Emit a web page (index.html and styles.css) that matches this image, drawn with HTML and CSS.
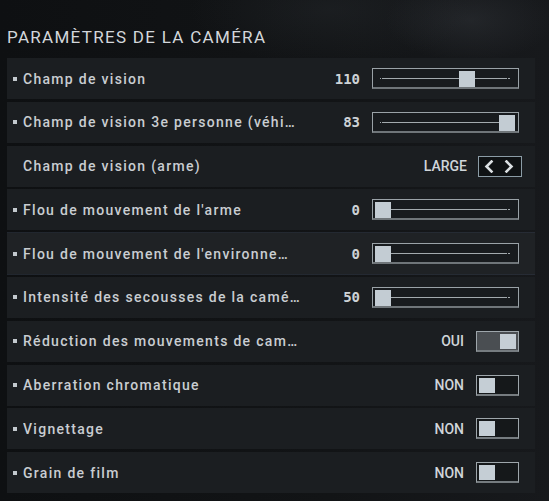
FILE: index.html
```html
<!DOCTYPE html>
<html lang="fr">
<head>
<meta charset="utf-8">
<title>Paramètres de la caméra</title>
<link rel="stylesheet" href="styles.css">
</head>
<body>
<main class="panel">
  <h1 class="title">PARAMÈTRES DE LA CAMÉRA</h1>
  <div class="rows">
    <div class="row">
      <span class="bullet"></span>
      <span class="label">Champ de vision</span>
      <span class="value">110</span>
      <div class="slider"><span class="track"></span><span class="thumb" style="left:86px"></span></div>
    </div>
    <div class="row">
      <span class="bullet"></span>
      <span class="label">Champ de vision 3e personne (véhicule)</span>
      <span class="value">83</span>
      <div class="slider"><span class="track"></span><span class="thumb" style="left:126px"></span></div>
    </div>
    <div class="row">
      <span class="bullet bullet-none"></span>
      <span class="label">Champ de vision (arme)</span>
      <span class="value value-word">LARGE</span>
      <div class="stepper">
        <svg class="chev" width="10" height="13" viewBox="0 0 10 13"><polyline points="7.5,1.5 2.5,6.5 7.5,11.5"/></svg>
        <svg class="chev" width="10" height="13" viewBox="0 0 10 13"><polyline points="2.5,1.5 7.5,6.5 2.5,11.5"/></svg>
      </div>
    </div>
    <div class="row">
      <span class="bullet"></span>
      <span class="label">Flou de mouvement de l'arme</span>
      <span class="value">0</span>
      <div class="slider"><span class="track"></span><span class="thumb" style="left:2px"></span></div>
    </div>
    <div class="row row-hover">
      <span class="bullet"></span>
      <span class="label">Flou de mouvement de l'environnement</span>
      <span class="value">0</span>
      <div class="slider"><span class="track"></span><span class="thumb" style="left:2px"></span></div>
    </div>
    <div class="row">
      <span class="bullet"></span>
      <span class="label">Intensité des secousses de la caméra</span>
      <span class="value">50</span>
      <div class="slider"><span class="track"></span><span class="thumb" style="left:2px"></span></div>
    </div>
    <div class="row">
      <span class="bullet"></span>
      <span class="label">Réduction des mouvements de caméra</span>
      <span class="value value-word">OUI</span>
      <div class="toggle toggle-on"><span class="knob"></span></div>
    </div>
    <div class="row">
      <span class="bullet"></span>
      <span class="label">Aberration chromatique</span>
      <span class="value value-word">NON</span>
      <div class="toggle"><span class="knob"></span></div>
    </div>
    <div class="row">
      <span class="bullet"></span>
      <span class="label">Vignettage</span>
      <span class="value value-word">NON</span>
      <div class="toggle"><span class="knob"></span></div>
    </div>
    <div class="row">
      <span class="bullet"></span>
      <span class="label">Grain de film</span>
      <span class="value value-word">NON</span>
      <div class="toggle"><span class="knob"></span></div>
    </div>
  </div>
</main>
</body>
</html>
```

FILE: styles.css
```css
* { box-sizing: border-box; }

html, body {
  margin: 0;
  padding: 0;
  width: 549px;
  height: 501px;
  overflow: hidden;
}

body {
  background:
    radial-gradient(ellipse 120px 60px at 470px 20px, rgba(60, 64, 70, 0.35), transparent 70%),
    radial-gradient(ellipse 200px 80px at 330px 10px, rgba(40, 44, 48, 0.4), transparent 70%),
    linear-gradient(90deg, #0e1012 0%, #121416 60%, #17191c 100%);
  color: #c9cdd1;
  font-family: Roboto, "Noto Sans", sans-serif;
}

.panel {
  padding: 27px 14px 0 7px;
}

.title {
  margin: 0 0 11px 0;
  font-family: Roboto, "Noto Sans", sans-serif;
  font-weight: 400;
  font-size: 17px;
  line-height: 20px;
  letter-spacing: 1.3px;
  color: #d3d7db;
}

.rows {
  display: flex;
  flex-direction: column;
  gap: 2.8px;
}

.row {
  height: 41px;
  display: flex;
  align-items: center;
  padding: 0 16px 0 6px;
  background: #1b1e21;
}

.row-hover {
  background: #1f2225;
  box-shadow: 0 -1px 0 rgba(70, 80, 100, 0.35), 0 1px 0 rgba(70, 80, 100, 0.35);
}

.bullet {
  width: 4px;
  height: 4px;
  background: #c3c9ce;
  margin-right: 6px;
  flex: none;
}

.bullet-none { visibility: hidden; }

.label {
  flex: 1;
  min-width: 0;
  max-width: 277px;
  white-space: nowrap;
  overflow: hidden;
  text-overflow: ellipsis;
  font-family: Roboto, "Noto Sans", sans-serif;
  font-weight: 500;
  font-size: 14px;
  letter-spacing: 1.3px;
  color: #c9cdd1;
}

.value {
  margin-left: auto;
  font-family: "DejaVu Sans Mono", "Liberation Mono", monospace;
  font-size: 14px;
  font-weight: bold;
  color: #cdd2d6;
  margin-right: 12px;
}

.value-word {
  font-family: Roboto, "Noto Sans", sans-serif;
  font-weight: 500;
  font-size: 14px;
  color: #d0d5d9;
}

.slider {
  position: relative;
  width: 147px;
  height: 21px;
  border: 1px solid #9aa2a7;
  border-bottom: 2px solid #6f7579;
  background: #181b1e;
  flex: none;
}

.track {
  position: absolute;
  left: 7px;
  right: 8px;
  top: 9px;
  height: 1px;
  background: #a3aaae;
}

.track::before,
.track::after {
  content: "";
  position: absolute;
  top: 0;
  width: 1px;
  height: 1px;
  background: #181b1e;
}
.track::before { left: 1px; }
.track::after { right: 2px; }

.thumb {
  position: absolute;
  top: 2px;
  width: 16px;
  height: 16px;
  background: #c3ccd3;
}

.stepper {
  width: 44px;
  height: 21px;
  margin-right: -3px;
  margin-left: -1px;
  border: 1px solid #8b9ca6;
  background: #0f1214;
  display: flex;
  align-items: center;
  justify-content: space-between;
  padding: 0 7px 0 5px;
  flex: none;
}

.chev polyline {
  fill: none;
  stroke: #dbe0e3;
  stroke-width: 2.6;
  stroke-linecap: square;
}

.toggle {
  position: relative;
  width: 43px;
  height: 21px;
  border: 1px solid #9ea6ab;
  border-bottom: 2px solid #767c80;
  background: #15181a;
  flex: none;
}

.toggle .knob {
  position: absolute;
  top: 2px;
  left: 2px;
  width: 16px;
  height: 15px;
  background: #c5ced5;
}

.toggle-on { background: #4a4e52; }
.toggle-on .knob { left: auto; right: 2px; }
```
